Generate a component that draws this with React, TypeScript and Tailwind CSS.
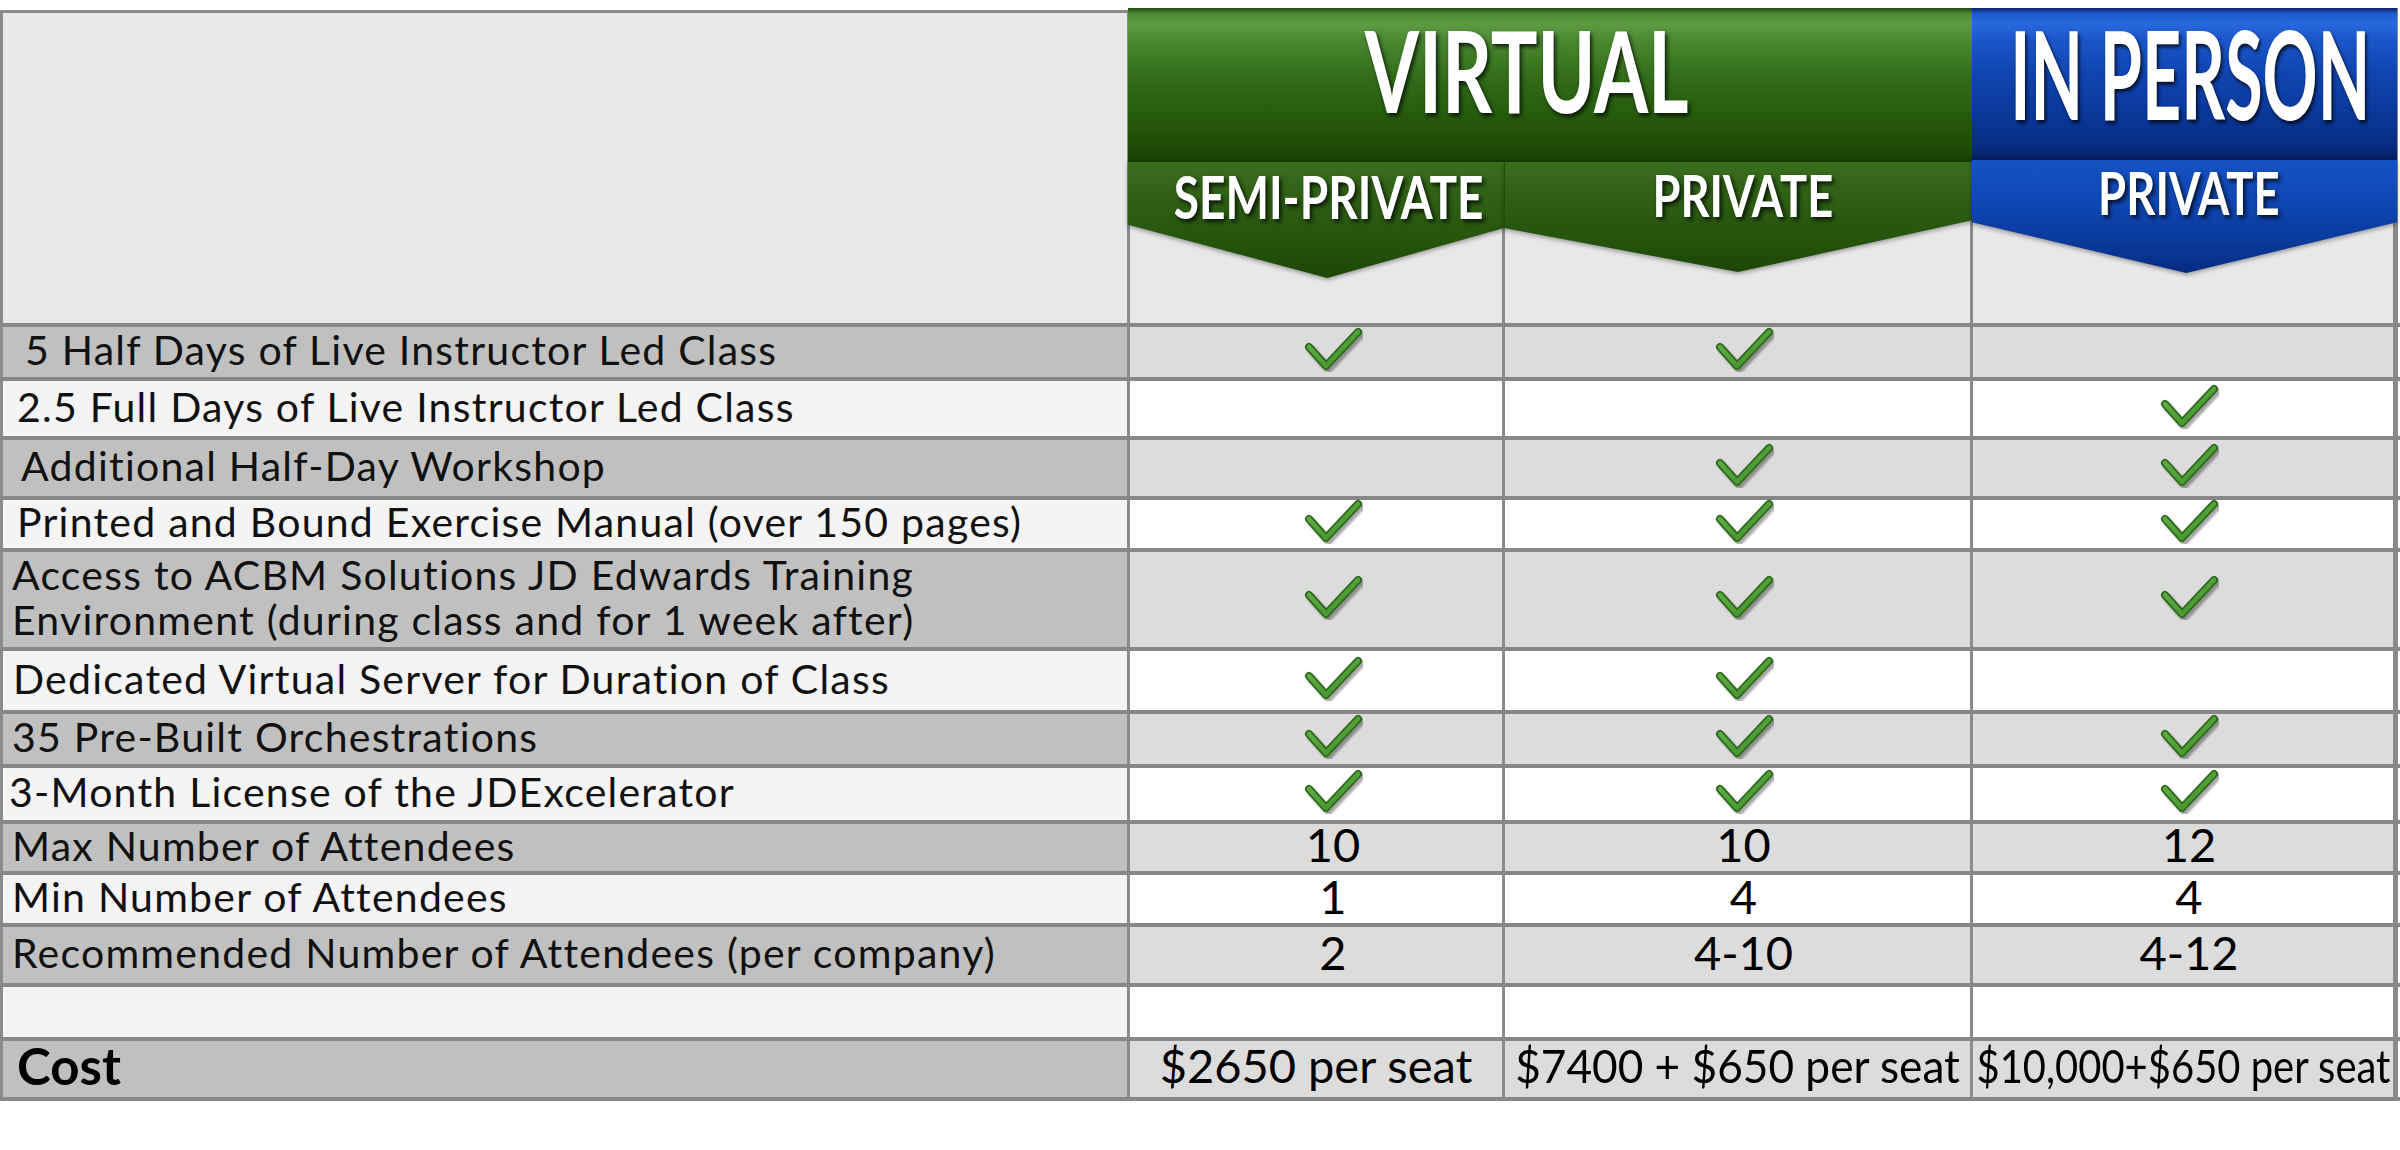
import React from 'react';

type Cell = 'check' | string | null;

interface Row {
  label: React.ReactNode;
  pl: string;
  h: string;
  cells: Cell[];
  bold?: boolean;
  cost?: boolean;
}

const rows: Row[] = [
  { label: '5 Half Days of Live Instructor Led Class', pl: 'pl-[22px]', h: 'h-[50px]', cells: ['check', 'check', null] },
  { label: '2.5 Full Days of Live Instructor Led Class', pl: 'pl-[14px]', h: 'h-[55px]', cells: [null, null, 'check'] },
  { label: 'Additional Half-Day Workshop', pl: 'pl-[18px]', h: 'h-[56px]', cells: [null, 'check', 'check'] },
  { label: 'Printed and Bound Exercise Manual (over 150 pages)', pl: 'pl-[14px]', h: 'h-[48px]', cells: ['check', 'check', 'check'] },
  {
    label: (
      <>
        Access to ACBM Solutions JD Edwards Training
        <br />
        Environment (during class and for 1 week after)
      </>
    ),
    pl: 'pl-[9px]',
    h: 'h-[95px]',
    cells: ['check', 'check', 'check'],
  },
  { label: 'Dedicated Virtual Server for Duration of Class', pl: 'pl-[10px]', h: 'h-[59px]', cells: ['check', 'check', null] },
  { label: '35 Pre-Built Orchestrations', pl: 'pl-[9px]', h: 'h-[50px]', cells: ['check', 'check', 'check'] },
  { label: '3-Month License of the JDExcelerator', pl: 'pl-[6px]', h: 'h-[52px]', cells: ['check', 'check', 'check'] },
  { label: 'Max Number of Attendees', pl: 'pl-[9px]', h: 'h-[47px]', cells: ['10', '10', '12'] },
  { label: 'Min Number of Attendees', pl: 'pl-[9px]', h: 'h-[48px]', cells: ['1', '4', '4'] },
  { label: 'Recommended Number of Attendees (per company)', pl: 'pl-[9px]', h: 'h-[56px]', cells: ['2', '4-10', '4-12'] },
  { label: '', pl: 'pl-[9px]', h: 'h-[50px]', cells: [null, null, null] },
  {
    label: 'Cost',
    pl: 'pl-[14px]',
    h: 'h-[56px]',
    bold: true,
    cost: true,
    cells: ['$2650 per seat', '$7400 + $650 per seat', '$10,000+$650 per seat'],
  },
];

const colWidths = ['w-[375px] border-r-[3px]', 'w-[468px] border-r-[3px]', 'w-[425px] border-r-[5px]'];
const colShift = ['pl-[34px]', 'pl-[12px]', 'pl-[12px]'];
const costScale = ['', 'scale-x-[0.94]', 'scale-x-[0.85]'];

const Check = () => (
  <svg width="60" height="46" viewBox="0 0 60 46" aria-hidden="true">
    <defs>
      <linearGradient id="ckfill" x1="0" y1="0" x2="1" y2="1">
        <stop offset="0" stopColor="#66b447" />
        <stop offset="1" stopColor="#3f8c2a" />
      </linearGradient>
      <filter id="ckshadow" x="-20%" y="-20%" width="140%" height="140%">
        <feGaussianBlur stdDeviation="1.3" />
      </filter>
    </defs>
    <path
      d="M7 22 L24 41 L56 7"
      fill="none"
      stroke="#000"
      strokeOpacity="0.35"
      strokeWidth="8"
      strokeLinecap="round"
      strokeLinejoin="round"
      transform="translate(1.5 2)"
      filter="url(#ckshadow)"
    />
    <path d="M6 21 L23 40 L55 6" fill="none" stroke="#2e6a1d" strokeWidth="8" strokeLinecap="round" strokeLinejoin="round" />
    <path d="M6 21 L23 40 L55 6" fill="none" stroke="url(#ckfill)" strokeWidth="4.5" strokeLinecap="round" strokeLinejoin="round" />
  </svg>
);

const shadow = '[text-shadow:3px_3px_5px_rgba(0,0,0,0.75)]';

export default function App() {
  return (
    <div className="w-[2400px] h-[1150px] bg-white overflow-hidden font-['Lato',sans-serif] text-[#111]">
      {/* header */}
      <div className="relative mt-[8px] flex h-[315px]">
        <div className="w-[1130px] self-end h-[313px] bg-[#e8e8e8] border-t-[3px] border-l-[3px] border-r-[3px] border-[#8a8a8a]" />
        {colWidths.map((w, i) => (
          <div key={i} className={`${w} h-full bg-[#e8e8e8] border-[#8a8a8a]`} />
        ))}

        {/* ribbons */}
        <div className="absolute left-[1128px] top-0 flex">
          <div className="flex flex-col w-[844px]">
            <div className="h-[154px] flex justify-center pr-[46px] pt-[5px] border-b border-[#163a04] bg-[linear-gradient(to_bottom,#1f4a0b_0%,#4e8d34_4%,#5e9c44_10%,#4a8730_22%,#336d19_45%,#265b0c_70%,#1d4a06_92%,#173d04_100%)]">
              <span className={`inline-block whitespace-nowrap scale-x-[0.69] font-bold text-white text-[113px] leading-none ${shadow}`}>VIRTUAL</span>
            </div>
            <div className="flex items-start">
              <div className="drop-shadow-[0_2px_2px_rgba(0,0,0,0.35)]">
                <div className="w-[376px] h-[116px] flex justify-center pl-[25px] pt-[5px] [clip-path:polygon(0_0,100%_0,100%_57%,53%_100%,0_54%)] bg-[linear-gradient(to_bottom,#3a6e1f_0%,#2d5f14_35%,#25540c_70%,#1c4606_100%)]">
                  <span className={`inline-block whitespace-nowrap scale-x-[0.78] font-bold text-white text-[59px] leading-none ${shadow}`}>SEMI-PRIVATE</span>
                </div>
              </div>
              <div className="drop-shadow-[0_2px_2px_rgba(0,0,0,0.35)]">
                <div className="w-[468px] h-[110px] flex justify-center pl-[9px] pt-[4px] border-l border-[#214d0a] [clip-path:polygon(0_0,100%_0,100%_53%,50%_100%,0_60%)] bg-[linear-gradient(to_bottom,#3a6e1f_0%,#2d5f14_35%,#25540c_70%,#1c4606_100%)]">
                  <span className={`inline-block whitespace-nowrap scale-x-[0.78] font-bold text-white text-[58px] leading-none ${shadow}`}>PRIVATE</span>
                </div>
              </div>
            </div>
          </div>
          <div className="flex flex-col w-[425px]">
            <div className="h-[152px] flex justify-center pl-[11px] pt-[3px] border-b border-[#041a50] bg-[linear-gradient(to_bottom,#0a2466_0%,#1d5bd0_4%,#2868de_10%,#1a55c8_22%,#0f44b0_45%,#0a389a_70%,#072c80_92%,#051f5e_100%)]">
              <span className={`inline-block whitespace-nowrap scale-x-[0.555] font-bold text-white text-[123px] leading-none ${shadow}`}>IN PERSON</span>
            </div>
            <div className="drop-shadow-[0_2px_2px_rgba(0,0,0,0.35)]">
              <div className="w-[425px] h-[113px] flex justify-center pl-[8px] pt-[3px] [clip-path:polygon(0_0,100%_0,100%_55%,50.4%_100%,0_55%)] bg-[linear-gradient(to_bottom,#1553c4_0%,#0f47b5_35%,#0a3b9e_70%,#062b80_100%)]">
                <span className={`inline-block whitespace-nowrap scale-x-[0.77] font-bold text-white text-[59px] leading-none ${shadow}`}>PRIVATE</span>
              </div>
            </div>
          </div>
        </div>
      </div>

      {/* body rows */}
      {rows.map((r, ri) => {
        const odd = ri % 2 === 0;
        return (
          <div key={ri} className={`flex border-t-4 border-[#878787] ${ri === rows.length - 1 ? 'border-b-4' : ''}`}>
            <div
              className={`w-[1130px] ${r.h} ${r.pl} pb-[5px] flex items-center border-l-[3px] border-r-[3px] border-[#8a8a8a] ${
                odd ? 'bg-[#c0c0c0]' : 'bg-[#f4f4f4]'
              } ${r.bold ? 'font-bold text-[51px] text-black' : 'text-[41px] tracking-[0.03em] leading-[45px]'}`}
            >
              <span className="whitespace-nowrap">{r.label}</span>
            </div>
            {r.cells.map((c, ci) => (
              <div
                key={ci}
                className={`${colWidths[ci]} ${r.h} border-[#8a8a8a] flex items-center justify-center ${
                  odd ? 'bg-[#dcdcdc]' : 'bg-white'
                } ${r.cost ? 'pb-[8px]' : `${colShift[ci]} pb-[6px]`}`}
              >
                {c === 'check' ? (
                  <Check />
                ) : c ? (
                  <span
                    className={`inline-block whitespace-nowrap text-[47px] leading-none text-black ${r.cost ? costScale[ci] : ''}`}
                  >
                    {c}
                  </span>
                ) : null}
              </div>
            ))}
          </div>
        );
      })}
    </div>
  );
}
